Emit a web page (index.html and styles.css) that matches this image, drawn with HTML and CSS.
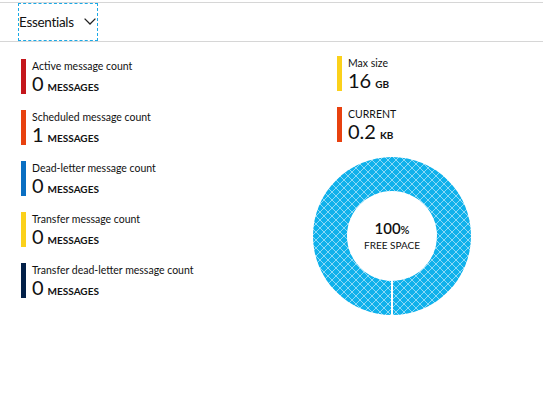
FILE: index.html
```html
<!DOCTYPE html>
<html lang="en">

<head>
  <meta charset="UTF-8" />
  <title>Queue overview</title>
  <link rel="stylesheet" href="styles.css">
</head>

<body>
  <div class="blade">
    <div class="toolbar">
      <button class="essentials">
        <span>Essentials</span>
        <svg class="chevron" width="12" height="7" viewBox="0 0 12 7">
          <polyline points="0.6,0.6 6,6 11.4,0.6" fill="none" stroke="#222" stroke-width="1.3" />
        </svg>
      </button>
    </div>

    <div class="content">
      <div class="metrics">
        <div class="metric">
          <div class="bar red"></div>
          <div class="metric-text">
            <div class="label">Active message count</div>
            <div class="value">0<span class="unit">MESSAGES</span></div>
          </div>
        </div>
        <div class="metric">
          <div class="bar orange"></div>
          <div class="metric-text">
            <div class="label">Scheduled message count</div>
            <div class="value">1<span class="unit">MESSAGES</span></div>
          </div>
        </div>
        <div class="metric">
          <div class="bar blue"></div>
          <div class="metric-text">
            <div class="label">Dead-letter message count</div>
            <div class="value">0<span class="unit">MESSAGES</span></div>
          </div>
        </div>
        <div class="metric">
          <div class="bar yellow"></div>
          <div class="metric-text">
            <div class="label">Transfer message count</div>
            <div class="value">0<span class="unit">MESSAGES</span></div>
          </div>
        </div>
        <div class="metric">
          <div class="bar navy"></div>
          <div class="metric-text">
            <div class="label">Transfer dead-letter message count</div>
            <div class="value">0<span class="unit">MESSAGES</span></div>
          </div>
        </div>
      </div>

      <div class="usage">
        <div class="metric">
          <div class="bar yellow"></div>
          <div class="metric-text">
            <div class="label">Max size</div>
            <div class="value">16<span class="unit">GB</span></div>
          </div>
        </div>
        <div class="metric">
          <div class="bar orange"></div>
          <div class="metric-text">
            <div class="label">CURRENT</div>
            <div class="value">0.2<span class="unit">KB</span></div>
          </div>
        </div>

        <div class="donut">
          <svg width="160" height="160" viewBox="0 0 160 160">
            <defs>
              <pattern id="hatch" patternUnits="userSpaceOnUse" width="8" height="8">
                <rect width="8" height="8" fill="#0fb1eb" />
                <path d="M0,0 L8,8 M8,0 L0,8" stroke="#8cd9f6" stroke-width="1" />
              </pattern>
            </defs>
            <circle cx="80" cy="80" r="79" fill="url(#hatch)" />
            <circle cx="80" cy="80" r="45" fill="#fff" />
            <line x1="80" y1="125" x2="80" y2="160" stroke="#fff" stroke-width="2" />
          </svg>
          <div class="donut-label">
            <div class="percent">100<span>%</span></div>
            <div class="free">FREE SPACE</div>
          </div>
        </div>
      </div>
    </div>
  </div>
</body>

</html>
```

FILE: styles.css
```css
body {
  margin: 0;
  background-color: #fff;
  font-family: "Lato", "Open Sans", sans-serif;
  color: #111;
}

.toolbar {
  margin-top: 2px;
  border-top: 1px solid #d6d6d6;
  border-bottom: 1px solid #d6d6d6;
  padding-left: 18px;
  height: 38px;
}

.essentials {
  display: flex;
  align-items: center;
  justify-content: space-between;
  height: 38px;
  width: 80px;
  padding: 0 1px 0 0;
  border: 1px dashed #1ba9e6;
  background: none;
  font-family: inherit;
  font-size: 13.5px;
  letter-spacing: -0.3px;
  color: #111;
  box-sizing: border-box;
}

.chevron {
  margin-top: -1px;
}

.content {
  display: flex;
  padding: 17px 0 0 21px;
}

.metrics {
  width: 291px;
}

.metric {
  display: flex;
  gap: 6px;
  height: 35px;
}

.metric+.metric {
  margin-top: 16px;
}

.bar {
  width: 5px;
  flex-shrink: 0;
}

.red {
  background-color: #c4161c;
}

.orange {
  background-color: #e8410f;
}

.blue {
  background-color: #0a6fc2;
}

.yellow {
  background-color: #fbd11b;
}

.navy {
  background-color: #022048;
}

.label {
  font-size: 10.5px;
  line-height: 14px;
}

.value {
  font-size: 20px;
  line-height: 21px;
}

.unit {
  font-size: 10px;
  font-weight: bold;
  margin-left: 4px;
}

.usage {
  margin-top: -3px;
}

.usage .metric {
  margin-left: 25px;
}

.donut {
  position: relative;
  width: 160px;
  height: 160px;
  margin-top: 14px;
}

.donut svg {
  display: block;
}

.donut-label {
  position: absolute;
  top: 0;
  left: 0;
  right: 0;
  bottom: 0;
  display: flex;
  flex-direction: column;
  align-items: center;
  justify-content: center;
}

.percent {
  font-size: 15px;
  font-weight: 600;
  line-height: 16px;
  margin-top: -1px;
}

.percent span {
  font-size: 11px;
}

.free {
  font-size: 10px;
  line-height: 14px;
}
```
